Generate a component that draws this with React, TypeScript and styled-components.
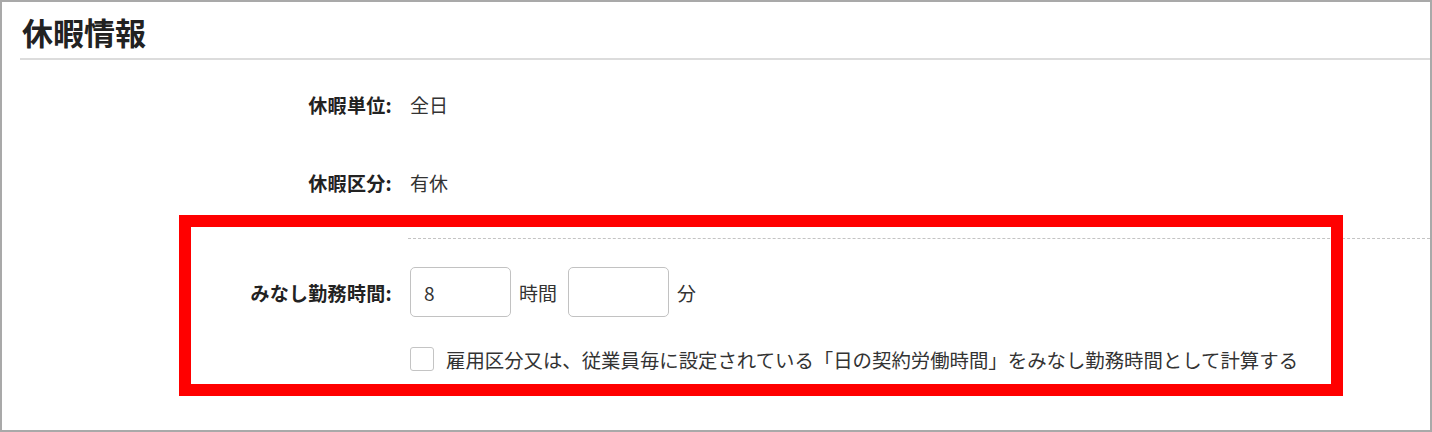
import React from 'react'
import styled, { createGlobalStyle } from 'styled-components'

const GlobalStyle = createGlobalStyle`
  html, body {
    margin: 0;
    padding: 0;
    background: #fff;
  }
  body {
    font-family: "Noto Sans CJK JP", "Noto Sans", sans-serif;
    color: #333;
  }
`

const Frame = styled.div`
  position: relative;
  box-sizing: border-box;
  width: 1432px;
  height: 432px;
  border: 2px solid #a9a9a9;
  overflow: hidden;
`

const Header = styled.div`
  margin-left: 18px;
  padding: 10px 0 7px 2px;
  border-bottom: 2px solid #dcdcdc;
`

const Title = styled.h2`
  margin: 0;
  font-size: 31px;
  line-height: 39px;
  font-weight: 700;
  color: #222;
`

const Form = styled.div`
  display: flex;
  flex-direction: column;
  padding-top: 26px;
`

const Row = styled.div<{ $height: number }>`
  display: grid;
  grid-template-columns: 398px 1fr;
  column-gap: 10px;
  align-items: center;
  height: ${p => p.$height}px;
`

const Label = styled.div`
  text-align: right;
  padding-right: 8px;
  font-size: 19px;
  font-weight: 700;
  color: #222;
  letter-spacing: 0.3px;
`

const Value = styled.div`
  display: flex;
  align-items: center;
  font-size: 19px;
  color: #333;
`

const Divider = styled.div`
  margin: 38px 0 0 406px;
  border-top: 1px dashed #c4c4c4;
`

const Field = styled.div`
  box-sizing: border-box;
  width: 101px;
  height: 50px;
  border: 1px solid #c2c2c2;
  border-radius: 5px;
  padding-left: 13px;
  display: flex;
  align-items: center;
  font-size: 19px;
  color: #333;
`

const Unit = styled.span`
  margin: 0 11px 0 8px;
  font-size: 19px;
`

const Check = styled.span`
  box-sizing: border-box;
  width: 24px;
  height: 24px;
  border: 1px solid #c4c4c4;
  border-radius: 3px;
  margin-right: 12px;
  flex-shrink: 0;
`

const CheckText = styled.span`
  font-size: 19.4px;
  color: #333;
  white-space: nowrap;
`

// annotation overlay drawn over the form
const Highlight = styled.div`
  position: absolute;
  left: 177px;
  top: 213px;
  width: 1164px;
  height: 181px;
  box-sizing: border-box;
  border: 12px solid #ff0000;
  pointer-events: none;
`

const App = () => {
  return (
    <>
      <GlobalStyle />
      <Frame>
        <Header>
          <Title>休暇情報</Title>
        </Header>
        <Form>
          <Row $height={36}>
            <Label>休暇単位:</Label>
            <Value>全日</Value>
          </Row>
          <Row $height={36} style={{ marginTop: 42 }}>
            <Label>休暇区分:</Label>
            <Value>有休</Value>
          </Row>
          <Divider />
          <Row $height={50} style={{ marginTop: 28 }}>
            <Label>みなし勤務時間:</Label>
            <Value>
              <Field>8</Field>
              <Unit>時間</Unit>
              <Field />
              <Unit>分</Unit>
            </Value>
          </Row>
          <Row $height={30} style={{ marginTop: 27 }}>
            <div />
            <Value>
              <Check />
              <CheckText>雇用区分又は、従業員毎に設定されている「日の契約労働時間」をみなし勤務時間として計算する</CheckText>
            </Value>
          </Row>
        </Form>
        <Highlight />
      </Frame>
    </>
  )
}

export default App
